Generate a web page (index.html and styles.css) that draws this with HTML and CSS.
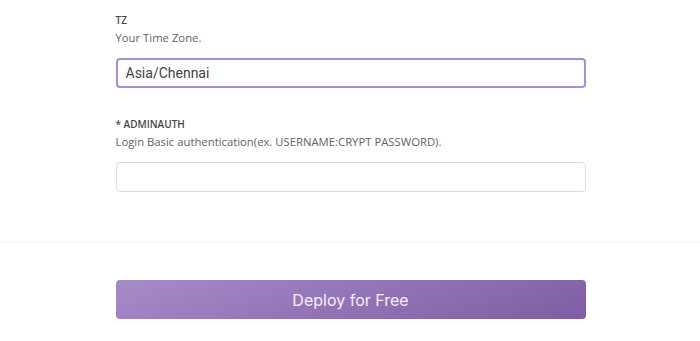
FILE: index.html
```html
<!DOCTYPE html>
<html lang="en">
<head>
  <meta charset="UTF-8">
  <title>Deploy</title>
  <link rel="stylesheet" href="styles.css">
</head>
<body>
  <div class="section">
    <div class="config">
      <div class="field">
        <label for="tz">TZ</label>
        <p class="hint">Your Time Zone.</p>
        <input type="text" id="tz" class="focused" value="Asia/Chennai">
      </div>
      <div class="field">
        <label for="adminauth">* ADMINAUTH</label>
        <p class="hint">Login Basic authentication(ex. USERNAME:CRYPT PASSWORD).</p>
        <input type="text" id="adminauth">
      </div>
    </div>
  </div>
  <div class="actions">
    <button>Deploy for Free</button>
  </div>
</body>
</html>
```

FILE: styles.css
```css
body { margin: 0; font-family: "Open Sans", "Liberation Sans", sans-serif; background: #fff; color: #3f3f44; }
.section { border-bottom: 1px solid #eef0f6; }
.config { width: 470px; margin: 0 auto; padding: 13px 0 50px 1px; }
.field { margin-bottom: 29px; }
.field:last-child { margin-bottom: 0; }
label { display: block; font-size: 10px; font-weight: 600; text-transform: uppercase; line-height: 14px; color: #45454b; }
.hint { margin: 4px 0 13px; font-size: 11.3px; line-height: 14px; color: #62626a; }
input { display: block; box-sizing: border-box; width: 470px; height: 30px; padding: 0 9px; font-family: Roboto, sans-serif; font-size: 14px; color: #3f3f44; border: 1px solid #d8dde6; border-radius: 4px; outline: none; }
input.focused { border: 2px solid #ab8dd5; padding: 0 8px; }
.actions { width: 470px; margin: 0 auto; padding: 37px 0 37px 1px; }
button { display: block; width: 100%; height: 39px; border: 0; border-radius: 4px; font-family: Inter, Roboto, sans-serif; font-size: 16px; color: #f4eefa; background: linear-gradient(160deg, #a68bc9, #7e5da3); }
```
